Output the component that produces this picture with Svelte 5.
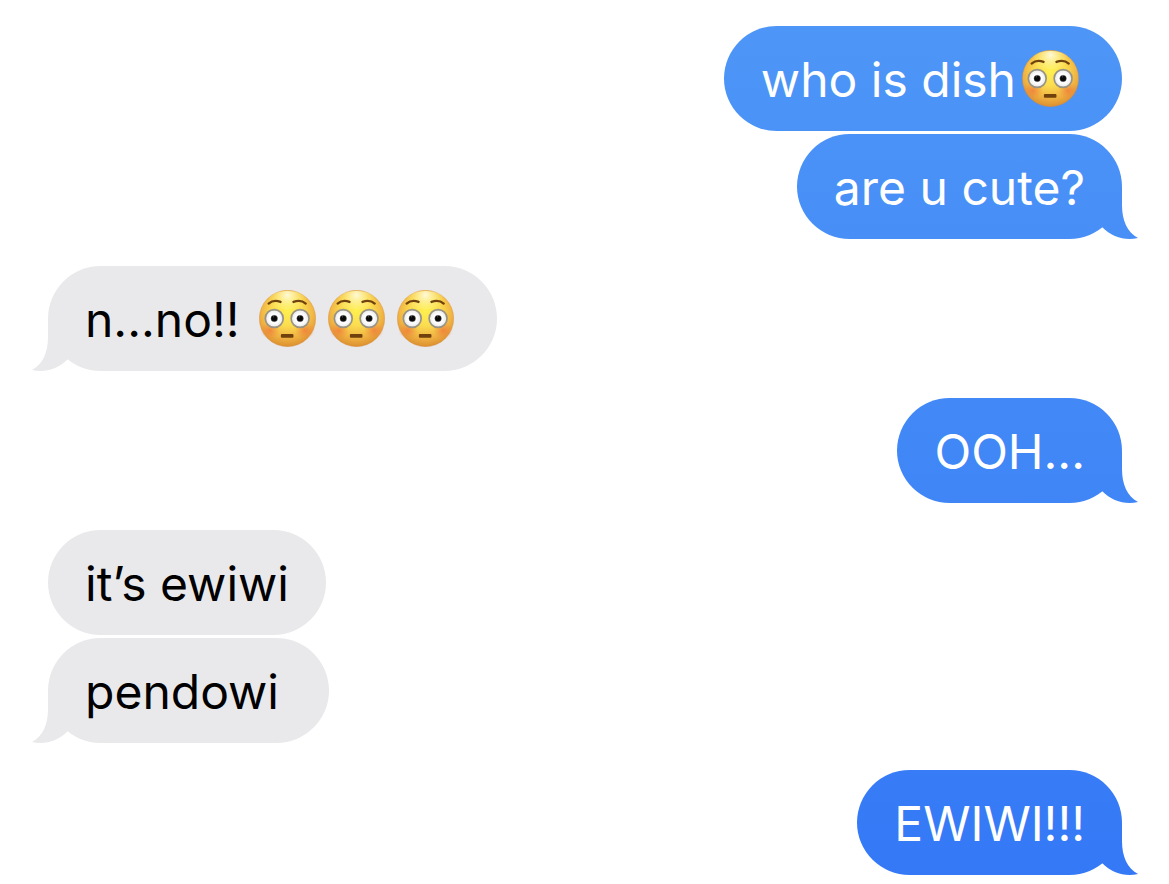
<script>
  const groups = [
    { sent: true, messages: [{ text: 'who is dish', faces: 1 }, { text: 'are u cute?', faces: 0 }] },
    { sent: false, messages: [{ text: 'n...no!! ', faces: 3 }] },
    { sent: true, messages: [{ text: 'OOH...', faces: 0 }] },
    { sent: false, messages: [{ text: 'it’s ewiwi', faces: 0 }, { text: 'pendowi ', faces: 0 }] },
    { sent: true, messages: [{ text: 'EWIWI!!!', faces: 0 }] }
  ];
</script>

{#snippet face(id)}
  <svg class="face" viewBox="36 29 172 172" role="img" aria-label="flushed face">
    <defs>
      <radialGradient id="skin-{id}" gradientUnits="userSpaceOnUse" cx="122" cy="92" r="112">
        <stop offset="0" stop-color="#fff04f" />
        <stop offset="0.4" stop-color="#fbdc50" />
        <stop offset="0.72" stop-color="#f0b343" />
        <stop offset="1" stop-color="#d98a2c" />
      </radialGradient>
      <radialGradient id="shine-{id}" gradientUnits="userSpaceOnUse" cx="122" cy="44" r="58">
        <stop offset="0" stop-color="#fffbe0" stop-opacity="0.95" />
        <stop offset="1" stop-color="#fff37a" stop-opacity="0" />
      </radialGradient>
      <radialGradient id="blush-{id}">
        <stop offset="0" stop-color="#f0683a" stop-opacity="0.6" />
        <stop offset="1" stop-color="#f0783a" stop-opacity="0" />
      </radialGradient>
      <radialGradient id="eye-{id}">
        <stop offset="0.5" stop-color="#ffffff" />
        <stop offset="0.85" stop-color="#eeeeee" />
        <stop offset="1" stop-color="#c4c4c4" />
      </radialGradient>
    </defs>
    <circle cx="122" cy="115" r="85" fill="url(#skin-{id})" stroke="#d3893c" stroke-opacity="0.6" stroke-width="2" />
    <ellipse cx="122" cy="60" rx="60" ry="28" fill="url(#shine-{id})" />
    <ellipse cx="69" cy="151" rx="30" ry="26" fill="url(#blush-{id})" />
    <ellipse cx="175" cy="151" rx="30" ry="26" fill="url(#blush-{id})" />
    {#each [82, 160] as x}
      <circle cx={x} cy="115" r="27" fill="url(#eye-{id})" stroke="#989384" stroke-width="5" />
      <circle cx={x} cy="115" r="10" fill="#090909" stroke="#8b8b8b" stroke-width="1" />
      <circle cx={x - 2} cy="110" r="1.5" fill="#777777" />
    {/each}
    <path d="M65 70Q80 57 101 65M140 65Q162 57 177 70" fill="none" stroke="#70420f" stroke-width="7" stroke-linecap="round" />
    <rect x="102" y="162" width="38" height="11" rx="3" fill="#70410c" />
  </svg>
{/snippet}

<main>
  {#each groups as group, g}
    <section class:sent={group.sent}>
      {#each group.messages as message, m}
        <p class="bubble" class:last={m === group.messages.length - 1}>
          <span>{message.text}</span>{#each Array(message.faces) as _, i}{@render face(`${g}-${m}-${i}`)}{/each}
        </p>
      {/each}
    </section>
  {/each}
</main>

<style>
  :global(body) {
    margin: 0;
    background: #fff;
  }

  main {
    display: flex;
    flex-direction: column;
    gap: 27px;
    padding: 26px 47px 9px 48px;
    font-family: Inter, 'Liberation Sans', sans-serif;
    font-size: 48px;
    line-height: 59px;
    color: #000;
  }

  section {
    --fill: #e9e9eb;
    display: flex;
    flex-direction: column;
    align-items: flex-start;
    gap: 3px;
  }

  .sent {
    --fill: linear-gradient(#4e97f7, #3478f6) fixed;
    align-items: flex-end;
    color: #fff;
  }

  .bubble {
    position: relative;
    display: flex;
    align-items: center;
    margin: 0;
    padding: 22px 37px;
    border-radius: 53px;
    background: var(--fill);
    white-space: pre-wrap;
  }

  .bubble span {
    padding-top: 2px;
  }

  /* The tail hangs from the bottom corner of the last bubble in a group. */
  .last::after {
    content: '';
    position: absolute;
    bottom: 0;
    left: -17px;
    width: 37px;
    height: 52px;
    background: var(--fill);
    clip-path: path('M17 0V18C17 33 12 45 1 51C14 54 27 50 37 40V0Z');
  }

  .sent .last::after {
    left: auto;
    right: -17px;
    clip-path: path('M20 0V18C20 33 25 45 36 51C23 54 10 50 0 40V0Z');
  }

  .face {
    flex: none;
    width: 57px;
    height: 57px;
    margin: 0 6px;
  }
</style>
